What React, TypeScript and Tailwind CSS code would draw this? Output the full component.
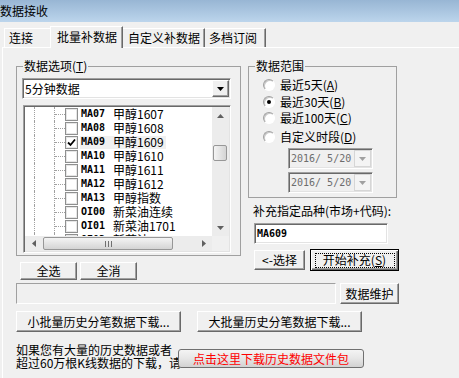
import React from "react";

const raised =
  "bg-[#f0f0f0] border border-t-white border-l-white border-r-[#696969] border-b-[#696969] shadow-[inset_-1px_-1px_0_#a0a0a0]";
const sunken =
  "border border-t-[#a0a0a0] border-l-[#a0a0a0] border-r-white border-b-white shadow-[inset_1px_1px_0_#696969,inset_-1px_-1px_0_#e3e3e3] p-[1px]";

const ROWS = [
  { code: "MA07", name: "甲醇1607" },
  { code: "MA08", name: "甲醇1608" },
  { code: "MA09", name: "甲醇1609", checked: true },
  { code: "MA10", name: "甲醇1610" },
  { code: "MA11", name: "甲醇1611" },
  { code: "MA12", name: "甲醇1612" },
  { code: "MA13", name: "甲醇指数" },
  { code: "OI00", name: "新菜油连续" },
  { code: "OI01", name: "新菜油1701" },
  { code: "OI02", name: "新菜油1702" },
];

const Tri = ({ dir = "down", color = "#000" }: { dir?: string; color?: string }) => {
  const pts =
    dir === "down" ? "0,0 7,0 3.5,4" : dir === "up" ? "0,4 7,4 3.5,0" : dir === "left" ? "4,0 4,7 0,3.5" : "0,0 0,7 4,3.5";
  const w = dir === "down" || dir === "up" ? 7 : 4;
  const h = dir === "down" || dir === "up" ? 4 : 7;
  return (
    <svg width={w} height={h} viewBox={`0 0 ${w} ${h}`}>
      <polygon points={pts} fill={color} />
    </svg>
  );
};

const Mn = ({ c }: { c: string }) => (
  <span>
    (<span className="underline underline-offset-[1px]">{c}</span>)
  </span>
);

const TreeRow = ({ code, name, checked }: { code: string; name: string; checked?: boolean }) => (
  <div className="flex h-[14px] shrink-0 items-center">
    <div className="ml-[9px] h-full w-[20px] border-l border-dotted border-[#a0a0a0]" />
    <div className="flex h-full w-[11px] items-center border-l border-dotted border-[#a0a0a0]">
      <div className="w-full border-t border-dotted border-[#a0a0a0]" />
    </div>
    <div className="flex h-[13px] w-[13px] items-center justify-center border border-[#8e8f8f] bg-white shadow-[inset_0_0_0_1px_#e6e6e6]">
      {checked && (
        <svg width="9" height="9" viewBox="0 0 9 9">
          <path d="M1 4.5 L3.5 7 L8 1.5" stroke="#000" strokeWidth="1.8" fill="none" />
        </svg>
      )}
    </div>
    <div className={`ml-[2px] flex h-[13px] items-center pl-[1px] pr-[2px] ${checked ? "bg-[#f0f0f0]" : ""}`}>
      <span className="w-[32px] font-['DejaVu_Sans_Mono',monospace] text-[10px] font-bold">{code}</span>
      <span className="whitespace-nowrap">{name}</span>
    </div>
  </div>
);

const Radio = ({ checked, children, className = "" }: { checked?: boolean; children: React.ReactNode; className?: string }) => (
  <div className={`flex h-[16px] items-center ${className}`}>
    <div className="ml-[14px] flex h-[12px] w-[12px] items-center justify-center rounded-full border border-t-[#a0a0a0] border-l-[#a0a0a0] border-r-white border-b-white bg-white shadow-[inset_1px_1px_0_#c8c8c8]">
      {checked && <div className="h-[4px] w-[4px] rounded-full bg-black" />}
    </div>
    <span className="ml-[5px] whitespace-nowrap">{children}</span>
  </div>
);

const DateBox = ({ className = "" }: { className?: string }) => (
  <div className={`${sunken} flex h-[21px] w-[85px] items-center bg-[#f0f0f0] ${className}`}>
    <span className="flex-1 whitespace-pre pl-[1px] font-['DejaVu_Sans_Mono',monospace] text-[10px] text-[#6d6d6d]">2016/ 5/20</span>
    <div className="flex h-[17px] w-[17px] items-center justify-center border border-[#d6d6d6] bg-[#f4f4f4]">
      <Tri color="#a0a0a0" />
    </div>
  </div>
);

const Btn = ({ className = "", children }: { className?: string; children: React.ReactNode }) => (
  <div className={`${raised} flex items-center justify-center whitespace-nowrap ${className}`}>{children}</div>
);

export default function App() {
  return (
    <div className="flex h-[378px] w-[459px] flex-col overflow-hidden bg-[#f0f0f0] font-['Noto_Sans_CJK_SC',sans-serif] text-[12px] leading-[14px] text-black">
      <div className="h-[22px] shrink-0 bg-gradient-to-b from-[#98b6d4] to-[#bcd5ec] pt-[4px] text-[12px]">数据接收</div>

      <div className="flex h-[25px] shrink-0 items-end pl-[4px]">
        <div className="flex h-[19px] w-[46px] items-center border-t border-l border-white pl-[4px]">连接</div>
        <div className="relative z-10 -mb-[1px] flex h-[22px] w-[73px] items-center border-t border-l border-r border-t-white border-l-white border-r-[#696969] bg-[#f0f0f0] pb-[1px] pl-[6px] shadow-[inset_-1px_0_0_#a0a0a0]">
          批量补数据
        </div>
        <div className="flex h-[19px] w-[82px] items-center border-t border-r border-t-white border-r-[#696969] pl-[5px] shadow-[inset_-1px_0_0_#a0a0a0]">
          自定义补数据
        </div>
        <div className="flex h-[19px] w-[61px] items-center border-t border-r border-t-white border-r-[#696969] pl-[4px] shadow-[inset_-1px_0_0_#a0a0a0]">
          多档订阅
        </div>
      </div>

      <div className="ml-[2px] flex-1 border-t border-l border-white pl-[13px]">
        <div className="mt-[11px] flex items-start">
          {/* left column */}
          <div className="flex w-[225px] flex-col">
            <fieldset className="h-[197px] w-[225px] border border-[#a0a0a0]">
              <legend className="ml-[6px] px-[1px] leading-[14px]">
                数据选项<Mn c="T" />
              </legend>
              <div className={`${sunken} ml-[5px] mt-[5px] flex h-[21px] w-[209px] items-center bg-white`}>
                <span className="flex-1 pl-[1px]">5分钟数据</span>
                <div className={`${raised} flex h-[17px] w-[17px] items-center justify-center`}>
                  <Tri />
                </div>
              </div>
              <div className={`${sunken} ml-[6px] mt-[6px] flex h-[148px] w-[208px] flex-col bg-white`}>
                <div className="flex min-h-0 flex-1">
                  <div className="flex flex-1 flex-col overflow-hidden">
                    {ROWS.map((r) => (
                      <TreeRow key={r.code} {...r} />
                    ))}
                  </div>
                  <div className="flex w-[17px] flex-col bg-[#ececec]">
                    <div className="flex h-[17px] items-center justify-center">
                      <Tri dir="up" color="#606060" />
                    </div>
                    <div className="ml-[1px] mt-[21px] h-[16px] w-[14px] rounded-[2px] border border-[#979797] bg-gradient-to-r from-[#f4f4f4] to-[#d4d4d4]" />
                    <div className="flex-1" />
                    <div className="flex h-[17px] items-center justify-center">
                      <Tri dir="down" color="#606060" />
                    </div>
                  </div>
                </div>
                <div className="flex h-[15px] shrink-0">
                  <div className="flex flex-1 items-center bg-[#ececec]">
                    <div className="flex h-full w-[17px] items-center justify-center">
                      <Tri dir="left" color="#606060" />
                    </div>
                    <div className="ml-[1px] flex h-[13px] w-[130px] items-center justify-center gap-[2px] rounded-[2px] border border-[#979797] bg-gradient-to-b from-[#f4f4f4] to-[#d4d4d4]">
                      <div className="h-[6px] w-[1px] bg-[#707070]" />
                      <div className="h-[6px] w-[1px] bg-[#707070]" />
                      <div className="h-[6px] w-[1px] bg-[#707070]" />
                    </div>
                    <div className="flex-1" />
                    <div className="flex h-full w-[17px] items-center justify-center">
                      <Tri dir="right" color="#606060" />
                    </div>
                  </div>
                  <div className="w-[17px] bg-[#f0f0f0]" />
                </div>
              </div>
            </fieldset>
            <div className="mt-[6px] flex">
              <Btn className="ml-[4px] h-[18px] w-[57px]">全选</Btn>
              <Btn className="ml-[3px] h-[18px] w-[57px]">全消</Btn>
            </div>
          </div>

          {/* right column */}
          <div className="ml-[7px] flex w-[151px] flex-col">
            <fieldset className="h-[139px] w-[149px] border border-[#a0a0a0]">
              <legend className="ml-[6px] px-[1px] leading-[14px]">数据范围</legend>
              <div className="flex flex-col">
                <Radio className="mt-[4px]">
                  最近5天<Mn c="A" />
                </Radio>
                <Radio className="mt-[1px]" checked>
                  最近30天<Mn c="B" />
                </Radio>
                <Radio>
                  最近100天<Mn c="C" />
                </Radio>
                <Radio className="mt-[3px]">
                  自定义时段<Mn c="D" />
                </Radio>
                <DateBox className="ml-[39px] mt-[3px]" />
                <DateBox className="ml-[39px] mt-[3px]" />
              </div>
            </fieldset>
            <div className="ml-[5px] mt-[6px] whitespace-nowrap">补充指定品种(市场+代码):</div>
            <div className={`${sunken} ml-[6px] mt-[5px] flex h-[21px] w-[134px] items-center bg-white`}>
              <span className="pl-[1px] font-['DejaVu_Sans_Mono',monospace] text-[10px] font-bold">MA609</span>
            </div>
            <div className="mt-[5px] flex items-center">
              <Btn className="ml-[6px] h-[20px] w-[51px]">&lt;-选择</Btn>
              <div className="ml-[5px] flex h-[22px] w-[89px] items-center justify-center border border-black bg-[#f0f0f0] shadow-[inset_1px_1px_0_white,inset_-1px_-1px_0_#696969,inset_-2px_-2px_0_#a0a0a0]">
                <div className="flex h-[15px] w-[80px] items-center justify-center border border-dotted border-black">
                  开始补充<Mn c="S" />
                </div>
              </div>
            </div>
          </div>
        </div>

        <div className="mt-[3px] flex items-center">
          <div className="h-[21px] w-[320px] border border-t-[#a0a0a0] border-l-[#a0a0a0] border-r-white border-b-white" />
          <Btn className="ml-[4px] h-[21px] w-[59px]">数据维护</Btn>
        </div>

        <div className="mt-[7px] flex">
          <Btn className="h-[21px] w-[165px]">小批量历史分笔数据下载...</Btn>
          <Btn className="ml-[16px] h-[21px] w-[165px]">大批量历史分笔数据下载...</Btn>
        </div>

        <div className="mt-[11px] flex items-end">
          <div className="w-[162px] shrink-0 whitespace-nowrap leading-[13px]">
            <div>如果您有大量的历史数据或者</div>
            <div>超过60万根K线数据的下载，请</div>
          </div>
          <div className="mb-[1px] flex h-[19px] w-[186px] items-center justify-center rounded-[3px] border border-[#707070] bg-gradient-to-b from-[#f4f4f4] via-[#e6e6e6] to-[#d2d2d2] text-[#ff0000]">
            点击这里下载历史数据文件包
          </div>
        </div>
      </div>
    </div>
  );
}
